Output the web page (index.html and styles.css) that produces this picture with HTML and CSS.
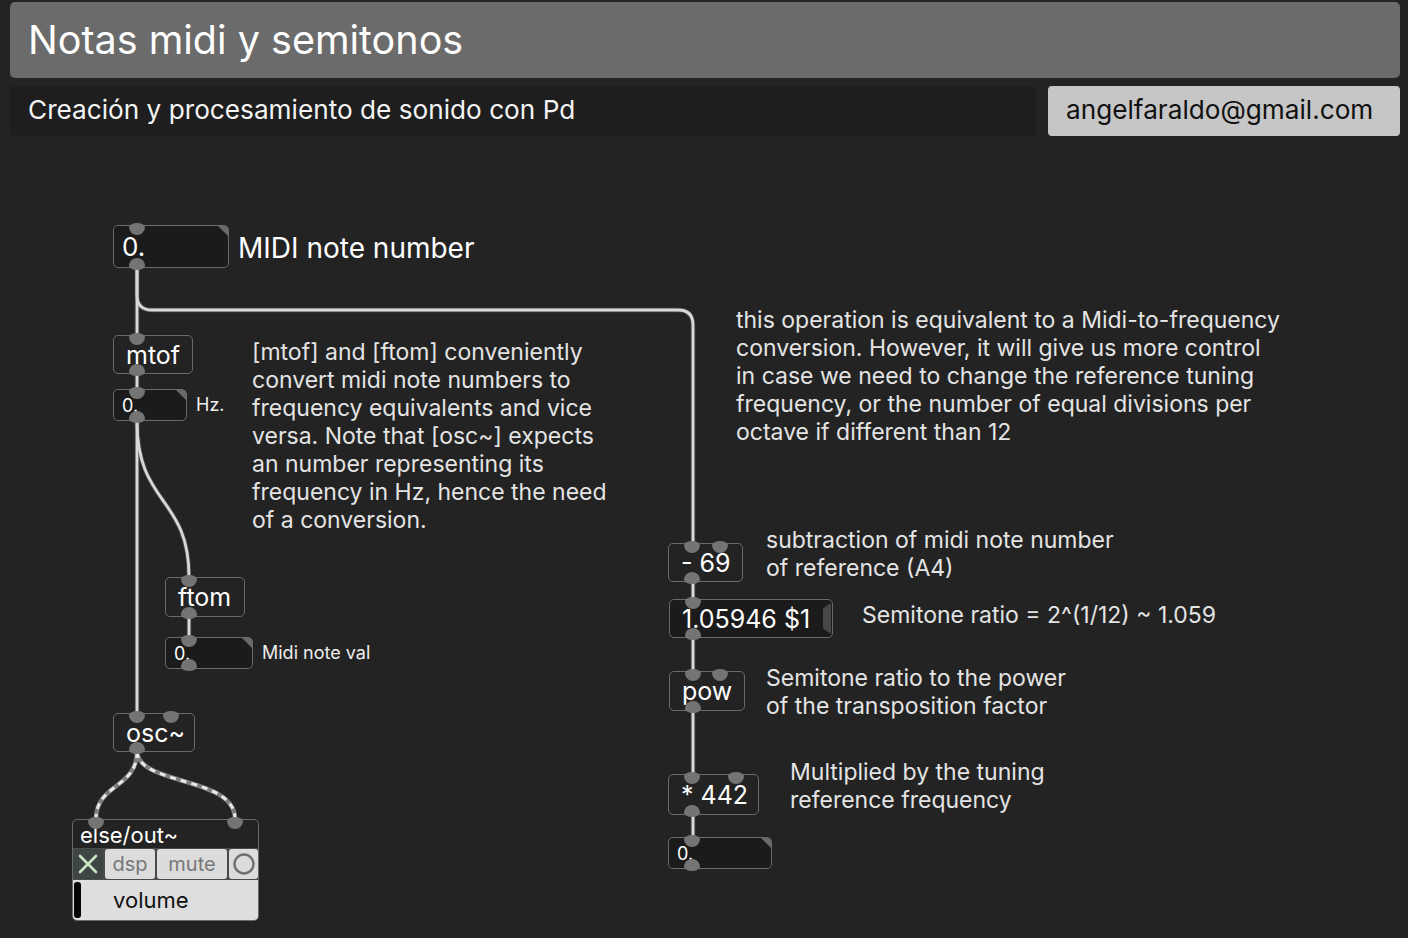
FILE: index.html
```html
<!DOCTYPE html>
<html lang="es">
<head>
<meta charset="utf-8">
<title>Notas midi y semitonos</title>
<link rel="stylesheet" href="styles.css">
</head>
<body>
<header class="header">
  <div class="titlebar">Notas midi y semitonos</div>
  <div class="subrow">
    <div class="subtitle">Creación y procesamiento de sonido con Pd</div>
    <div class="email">angelfaraldo@gmail.com</div>
  </div>
</header>
<main class="canvas">
  <svg class="cables" width="1408" height="802" viewBox="0 0 1408 802">
    <g class="cable-edge">
      <path d="M137 132 V199"/>
      <path d="M137 132 V159 Q137 174 152 174 H678 Q693 174 693 189 V407"/>
      <path d="M137 238 V253"/>
      <path d="M137 285 V577"/>
      <path d="M137 285 C137 370 189 360 189 441"/>
      <path d="M189 481 V501"/>
      <path d="M693 446 V463"/>
      <path d="M693 502 V535"/>
      <path d="M693 575 V638"/>
      <path d="M693 679 V701"/>
    </g>
    <g class="cable">
      <path d="M137 132 V199"/>
      <path d="M137 132 V159 Q137 174 152 174 H678 Q693 174 693 189 V407"/>
      <path d="M137 238 V253"/>
      <path d="M137 285 V577"/>
      <path d="M137 285 C137 370 189 360 189 441"/>
      <path d="M189 481 V501"/>
      <path d="M693 446 V463"/>
      <path d="M693 502 V535"/>
      <path d="M693 575 V638"/>
      <path d="M693 679 V701"/>
    </g>
    <g class="sig">
      <path d="M137 616 C137 652 96 648 96 683"/>
      <path d="M137 616 C140 650 235 640 235 683"/>
    </g>
    <g class="sig-dash">
      <path d="M137 616 C137 652 96 648 96 683"/>
      <path d="M137 616 C140 650 235 640 235 683"/>
    </g>
  </svg>

  <div class="box num n-nb1"><span class="io in l"></span><span class="io out l"></span>0.</div>
  <div class="lbl lbl-midi">MIDI note number</div>

  <div class="box obj n-mtof"><span class="io in l"></span><span class="io out l"></span>mtof</div>
  <div class="box num small n-nb2"><span class="io in l"></span><span class="io out l"></span>0.</div>
  <div class="lbl small-lbl lbl-hz">Hz.</div>

  <div class="comment c-mtof">[mtof] and [ftom] conveniently<br>convert midi note numbers to<br>frequency equivalents and vice<br>versa. Note that [osc~] expects<br>an number representing its<br>frequency in Hz, hence the need<br>of a conversion.</div>

  <div class="box obj n-ftom"><span class="io in l"></span><span class="io out l"></span>ftom</div>
  <div class="box num small n-nb3"><span class="io in l"></span><span class="io out l"></span>0.</div>
  <div class="lbl small-lbl lbl-midival">Midi note val</div>

  <div class="box obj n-osc"><span class="io in l"></span><span class="io in r-osc"></span><span class="io out l"></span>osc~</div>

  <div class="box out-box n-out">
    <span class="io in l-out"></span><span class="io in r-out"></span>
    <div class="out-title">else/out~</div>
    <div class="out-btns">
      <div class="ob ob-x"><svg width="20" height="20" viewBox="0 0 20 20"><path d="M2 2 L18 18 M18 2 L2 18" stroke="#c9e8c2" stroke-width="2.6" stroke-linecap="round"/></svg></div>
      <div class="ob ob-dsp">dsp</div>
      <div class="ob ob-mute">mute</div>
      <div class="ob ob-o"><svg width="24" height="24" viewBox="0 0 24 24"><circle cx="12" cy="12" r="9.5" fill="none" stroke="#707070" stroke-width="2.4"/></svg></div>
    </div>
    <div class="out-vol"><span class="vol-bar"></span><span class="vol-txt">volume</span></div>
  </div>

  <div class="comment c-right">this operation is equivalent to a Midi-to-frequency<br>conversion. However, it will give us more control<br>in case we need to change the reference tuning<br>frequency, or the number of equal divisions per<br>octave if different than 12</div>

  <div class="box obj n-sub"><span class="io in l"></span><span class="io in r-sub"></span><span class="io out l"></span>- 69</div>
  <div class="comment c-sub">subtraction of midi note number<br>of reference (A4)</div>

  <div class="box msg n-msg"><span class="io in l"></span><span class="io out l"></span>1.05946 $1<span class="flag"></span></div>
  <div class="comment c-ratio">Semitone ratio = 2^(1/12) ~ 1.059</div>

  <div class="box obj n-pow"><span class="io in l"></span><span class="io in r-pow"></span><span class="io out l"></span>pow</div>
  <div class="comment c-pow">Semitone ratio to the power<br>of the transposition factor</div>

  <div class="box obj n-mul"><span class="io in l"></span><span class="io in r-mul"></span><span class="io out l"></span>* 442</div>
  <div class="comment c-mul">Multiplied by the tuning<br>reference frequency</div>

  <div class="box num small n-nb4"><span class="io in l"></span><span class="io out l"></span>0.</div>
</main>
</body>
</html>
```
FILE: styles.css
```css
* { box-sizing: border-box; }
html, body {
  margin: 0;
  padding: 0;
  background: #232323;
  font-family: Inter, "Noto Sans", sans-serif;
  color: #f2f2f2;
  overflow: hidden;
}
body { width: 1408px; height: 938px; }

.header {
  display: flex;
  flex-direction: column;
  gap: 8px;
  padding: 2px 8px 0 10px;
}
.titlebar {
  height: 76px;
  background: #6b6b6b;
  border-radius: 5px;
  padding-left: 18px;
  display: flex;
  align-items: center;
  font-size: 39.5px;
  color: #ffffff;
}
.subrow {
  display: flex;
  gap: 12px;
  height: 50px;
}
.subtitle {
  flex: 1;
  background: #1e1e1e;
  border-radius: 4px;
  padding: 0 0 4px 18px;
  display: flex;
  align-items: center;
  font-size: 26.2px;
  color: #f4f4f4;
}
.email {
  width: 352px;
  background: #c6c6c6;
  border-radius: 4px;
  padding: 0 0 4px 18px;
  display: flex;
  align-items: center;
  font-size: 26.2px;
  color: #111111;
}

.canvas {
  position: relative;
  height: 802px;
}
.cables {
  position: absolute;
  left: 0;
  top: 0;
  z-index: 0;
}
.cable-edge path {
  fill: none;
  stroke: #4a4a4a;
  stroke-width: 4.5;
}
.cable path {
  fill: none;
  stroke: #d8d8d8;
  stroke-width: 2.8;
}
.sig path {
  fill: none;
  stroke: #7e7e7e;
  stroke-width: 4.5;
}
.sig-dash path {
  fill: none;
  stroke: #e8e8e8;
  stroke-width: 3;
  stroke-dasharray: 6 5;
}

.box {
  position: absolute;
  z-index: 1;
  border: 1.5px solid #6a6a6a;
  border-radius: 5px;
  display: flex;
  align-items: center;
  color: #ffffff;
  white-space: nowrap;
}
.obj {
  background: #232323;
  font-size: 25px;
  padding-left: 12px;
}
.num {
  background: #1b1b1b;
  font-size: 26px;
  padding-left: 8px;
}
.num::after {
  content: "";
  position: absolute;
  top: 0;
  right: 0;
  width: 0;
  height: 0;
  border-top: 10px solid #6a6a6a;
  border-left: 10px solid transparent;
  border-top-right-radius: 3px;
}
.num.small {
  font-size: 18px;
  padding-left: 8px;
}
.msg {
  background: #1b1b1b;
  font-size: 25px;
  padding-left: 12px;
}
.flag {
  position: absolute;
  right: 1px;
  top: 3px;
  bottom: 3px;
  width: 8px;
  background: #474747;
  clip-path: polygon(100% 0, 0 18%, 0 82%, 100% 100%);
}

.io {
  position: absolute;
  width: 16px;
  height: 12px;
  background: #747474;
}
.io.in {
  top: -3px;
  border-radius: 8px 8px 8px 8px / 4px 4px 8px 8px;
}
.io.out {
  bottom: -3px;
  border-radius: 8px 8px 8px 8px / 8px 8px 4px 4px;
}
.io.l { left: 14.5px; }
.io.r-osc { left: 48.5px; }
.io.r-sub { left: 42.5px; }
.io.r-pow { left: 41.5px; }
.io.r-mul { left: 58.5px; }
.io.l-out { left: 14.5px; }
.io.r-out { left: 153.5px; }

.n-nb1 { left: 113px; top: 89px; width: 116px; height: 43px; }
.n-mtof { left: 113px; top: 199px; width: 80px; height: 39px; }
.n-nb2 { left: 113px; top: 253px; width: 74px; height: 32px; }
.n-ftom { left: 165px; top: 441px; width: 80px; height: 40px; }
.n-nb3 { left: 165px; top: 501px; width: 88px; height: 32px; }
.n-osc { left: 113px; top: 577px; width: 82px; height: 39px; }
.n-out { left: 72px; top: 683px; width: 187px; height: 102px; }
.n-sub { left: 668px; top: 407px; width: 75px; height: 39px; }
.n-msg { left: 669px; top: 463px; width: 164px; height: 39px; }
.n-pow { left: 669px; top: 535px; width: 76px; height: 40px; }
.n-mul { left: 668px; top: 638px; width: 91px; height: 41px; }
.n-nb4 { left: 668px; top: 701px; width: 104px; height: 32px; }

.out-box {
  flex-direction: column;
  align-items: stretch;
  background: #232323;
  overflow: visible;
}
.out-title {
  height: 28px;
  font-size: 22px;
  line-height: 30px;
  padding-left: 7px;
  color: #ffffff;
}
.out-btns {
  display: flex;
  gap: 2px;
  height: 32px;
  padding: 1px 0;
  background: #4a4a4a;
}
.ob {
  border-radius: 3px;
  display: flex;
  align-items: center;
  justify-content: center;
  background: #dcdcdc;
  color: #777777;
  font-size: 20px;
}
.ob-x { width: 30px; background: #3e4545; }
.ob-dsp { width: 50px; }
.ob-mute { width: 70px; }
.ob-o { flex: 1; }
.out-vol {
  flex: 1;
  display: flex;
  align-items: center;
  background: #dedede;
  border-radius: 0 0 4px 4px;
  color: #111111;
  font-size: 22px;
  position: relative;
}
.vol-bar {
  width: 7px;
  align-self: stretch;
  margin: 2px 0 2px 1px;
  background: #050505;
  border-radius: 3px;
}
.vol-txt { margin-left: 32px; }

.lbl, .comment {
  position: absolute;
  z-index: 1;
  white-space: nowrap;
  color: #e4e4e4;
}
.lbl-midi {
  left: 238px;
  top: 96px;
  font-size: 28px;
  line-height: 32px;
  color: #ffffff;
}
.small-lbl {
  font-size: 18px;
  line-height: 22px;
  color: #eeeeee;
}
.lbl-hz { left: 196px; top: 258px; }
.lbl-midival { left: 262px; top: 506px; }

.comment {
  font-size: 23px;
  line-height: 28px;
}
.c-mtof { left: 252px; top: 202px; }
.c-right { left: 736px; top: 170px; }
.c-sub { left: 766px; top: 390px; }
.c-ratio { left: 862px; top: 465px; }
.c-pow { left: 766px; top: 528px; }
.c-mul { left: 790px; top: 622px; }
```
